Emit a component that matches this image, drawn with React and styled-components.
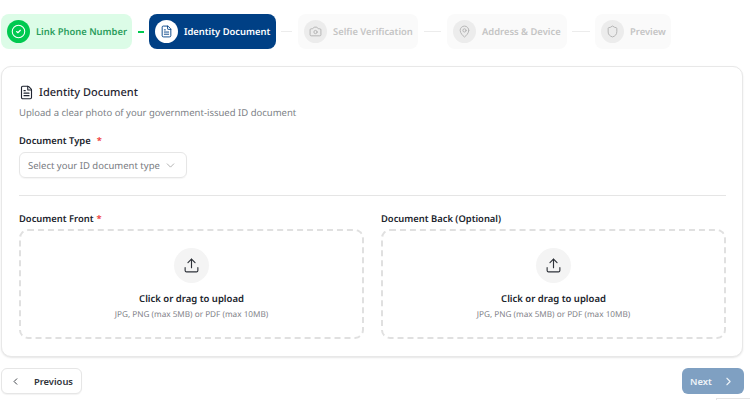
import React from "react";
import styled, { createGlobalStyle } from "styled-components";
import { FileText, Camera, MapPin, Shield, Upload, ChevronDown, ChevronLeft, ChevronRight, CircleCheck } from "lucide-react";

const Global = createGlobalStyle`
  html, body { margin: 0; padding: 0; background: #fff; width: 750px; height: 400px; overflow: hidden; }
  * { box-sizing: border-box; }
  body { font-family: "Noto Sans", "Open Sans", sans-serif; text-rendering: geometricPrecision; }
`;

const Page = styled.div`
  width: 750px;
  height: 400px;
  padding: 14px 7px 0 1px;
  display: flex;
  flex-direction: column;
`;

const Stepper = styled.div`
  display: flex;
  align-items: center;
  height: 35px;
`;

const palette = {
  done: { bg: "#dcfce7", fg: "#2a9d5c", circle: "#00c950", icon: "#fff" },
  active: { bg: "#004085", fg: "#fff", circle: "#fff", icon: "#004085" },
  idle: { bg: "#fafafa", fg: "#c4c4c4", circle: "#ececec", icon: "#b0b0b0" },
};

const Step = styled.div`
  display: flex;
  align-items: center;
  gap: 6px;
  height: 35px;
  width: ${(p) => p.$w}px;
  padding: 0 6px;
  border-radius: 8px;
  background: ${(p) => palette[p.$kind].bg};
  color: ${(p) => palette[p.$kind].fg};
  font-size: 9.4px;
  font-weight: 600;
  white-space: nowrap;
`;

const StepCircle = styled.div`
  width: 23px;
  height: 23px;
  flex: none;
  border-radius: 50%;
  display: flex;
  align-items: center;
  justify-content: center;
  background: ${(p) => palette[p.$kind].circle};
  color: ${(p) => palette[p.$kind].icon};
`;

const Connector = styled.div`
  width: ${(p) => p.$w}px;
  height: ${(p) => (p.$done ? 2 : 1)}px;
  margin: 0 ${(p) => p.$r}px 0 ${(p) => p.$l}px;
  background: ${(p) => (p.$done ? "#00c950" : "#ececec")};
`;

const Card = styled.section`
  margin-top: 17px;
  height: 291px;
  padding: 17px 16px 17px 17px;
  border: 1px solid #e8e8e8;
  border-radius: 10px;
  box-shadow: 0 1px 2px rgba(0, 0, 0, 0.1);
  background: #fff;
`;

const CardTitle = styled.h2`
  margin: 0;
  display: flex;
  align-items: center;
  gap: 5px;
  height: 16px;
  font-size: 11px;
  font-weight: 500;
  color: #1f2430;
  white-space: nowrap;
`;

const Subtitle = styled.p`
  margin: 5px 0 0;
  font-size: 9.5px;
  line-height: 15px;
  color: #7c7f86;
`;

const Label = styled.div`
  font-size: 9.4px;
  font-weight: 600;
  line-height: 14px;
  color: #20242c;
  white-space: nowrap;
`;

const Star = styled.span`
  color: #ef4444;
  margin-left: ${(p) => p.$gap}px;
`;

const TypeField = styled.div`
  margin-top: 14px;
`;

const Select = styled.div`
  margin-top: 4px;
  width: 168px;
  height: 26px;
  padding: 0 9px 0 8px;
  display: flex;
  align-items: center;
  justify-content: space-between;
  border: 1px solid #e6e6e6;
  border-radius: 6px;
  box-shadow: 0 1px 1px rgba(0, 0, 0, 0.04);
  font-size: 9.5px;
  color: #777a80;
  white-space: nowrap;
`;

const Divider = styled.hr`
  margin: 17px 0 0;
  border: 0;
  border-top: 1px solid #e5e5e5;
`;

const UploadGrid = styled.div`
  margin-top: 16px;
  display: grid;
  grid-template-columns: 345px 345px;
  column-gap: 17px;
`;

const DropZone = styled.div`
  margin-top: 3px;
  height: 110px;
  border: 2px dashed #e0e0e0;
  border-radius: 9px;
  display: flex;
  flex-direction: column;
  align-items: center;
  padding-top: 17px;
`;

const UploadCircle = styled.div`
  width: 35px;
  height: 35px;
  border-radius: 50%;
  background: #f4f4f4;
  color: #2d3138;
  display: flex;
  align-items: center;
  justify-content: center;
`;

const DropTitle = styled.div`
  margin-top: 8px;
  font-size: 9.5px;
  font-weight: 600;
  line-height: 15px;
  color: #20242c;
`;

const DropHint = styled.div`
  margin-top: 3px;
  font-size: 8.2px;
  line-height: 12px;
  color: #7f8288;
`;

const Footer = styled.div`
  margin: 11px -1px 0 0;
  display: flex;
  justify-content: space-between;
`;

const PrevButton = styled.button`
  width: 81px;
  height: 26px;
  padding: 0 8px;
  display: flex;
  align-items: center;
  gap: 13px;
  background: #fff;
  border: 1px solid #e6e6e6;
  border-radius: 6px;
  box-shadow: 0 1px 1px rgba(0, 0, 0, 0.05);
  font: 600 9.4px "Noto Sans", sans-serif;
  color: #30343b;
`;

const NextButton = styled.button`
  width: 62px;
  height: 26px;
  padding: 0 9px 0 8px;
  display: flex;
  align-items: center;
  justify-content: space-between;
  background: #7fa0c2;
  border: 0;
  border-radius: 6px;
  font: 600 9.4px "Noto Sans", sans-serif;
  color: #eef3f8;
`;

const CornerBadge = styled.div`
  position: fixed;
  left: 716px;
  top: 398px;
  width: 34px;
  height: 4px;
  background: #fff;
  border-top: 1px solid #e4e4e4;
  border-left: 1px solid #e4e4e4;
`;

const steps = [
  { kind: "done", w: 131, label: "Link Phone Number", Icon: CircleCheck, size: 15 },
  { kind: "active", w: 127, label: "Identity Document", Icon: FileText, size: 13 },
  { kind: "idle", w: 120, label: "Selfie Verification", Icon: Camera, size: 13 },
  { kind: "idle", w: 120, label: "Address & Device", Icon: MapPin, size: 13 },
  { kind: "idle", w: 76, label: "Preview", Icon: Shield, size: 13 },
];

const gaps = [
  { w: 6, l: 6, r: 5, done: true },
  { w: 11, l: 5, r: 6 },
  { w: 17, l: 6, r: 6 },
  { w: 18, l: 5, r: 5 },
];

function Zone({ label }) {
  return (
    <div>
      <Label>{label}</Label>
      <DropZone>
        <UploadCircle><Upload size={17} strokeWidth={1.6} /></UploadCircle>
        <DropTitle>Click or drag to upload</DropTitle>
        <DropHint>JPG, PNG (max 5MB) or PDF (max 10MB)</DropHint>
      </DropZone>
    </div>
  );
}

export default function App() {
  return (
    <Page>
      <Global />
      <Stepper>
        {steps.map((s, i) => (
          <React.Fragment key={s.label}>
            <Step $kind={s.kind} $w={s.w}>
              <StepCircle $kind={s.kind}><s.Icon size={s.size} strokeWidth={1.7} /></StepCircle>
              {s.label}
            </Step>
            {gaps[i] && <Connector $w={gaps[i].w} $l={gaps[i].l} $r={gaps[i].r} $done={gaps[i].done} />}
          </React.Fragment>
        ))}
      </Stepper>
      <Card>
        <CardTitle><FileText size={15} strokeWidth={1.8} />Identity Document</CardTitle>
        <Subtitle>Upload a clear photo of your government-issued ID document</Subtitle>
        <TypeField>
          <Label>Document Type<Star $gap={6}>*</Star></Label>
          <Select>Select your ID document type<ChevronDown size={13} strokeWidth={1.4} color="#9a9a9a" /></Select>
        </TypeField>
        <Divider />
        <UploadGrid>
          <Zone label={<>Document Front<Star $gap={3}>*</Star></>} />
          <Zone label="Document Back (Optional)" />
        </UploadGrid>
      </Card>
      <Footer>
        <PrevButton><ChevronLeft size={13} strokeWidth={2} />Previous</PrevButton>
        <NextButton>Next<ChevronRight size={13} strokeWidth={2} /></NextButton>
      </Footer>
      <CornerBadge />
    </Page>
  );
}
